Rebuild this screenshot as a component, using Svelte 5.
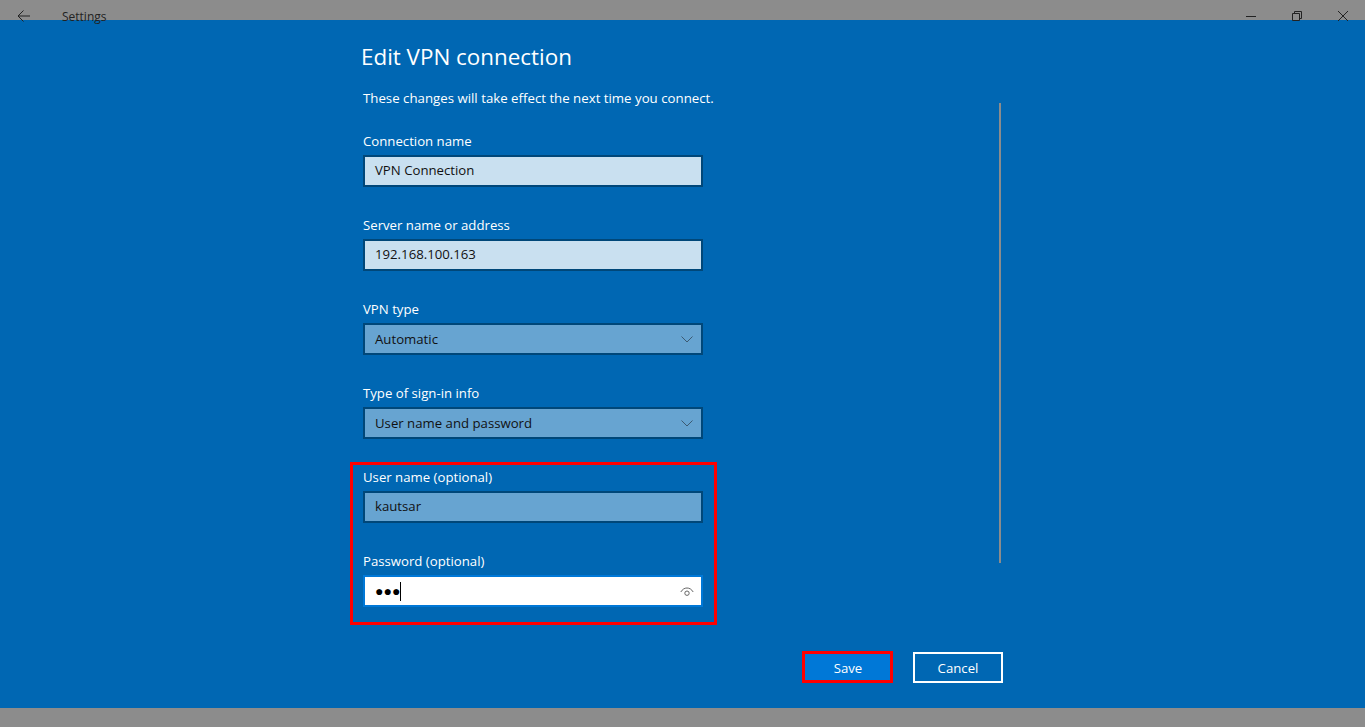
<script>
  const topFields = [
    { label: 'Connection name', value: 'VPN Connection', kind: 'text' },
    { label: 'Server name or address', value: '192.168.100.163', kind: 'text' },
    { label: 'VPN type', value: 'Automatic', kind: 'select' },
    { label: 'Type of sign-in info', value: 'User name and password', kind: 'select' }
  ];
</script>

<div class="window">
  <header class="titlebar">
    <svg class="back" width="16" height="16" viewBox="0 0 16 16" aria-hidden="true">
      <path d="M14 8H2.500M7.500 2.500 2 8l5.500 5.500" fill="none" stroke="#222" stroke-width="1" />
    </svg>
    <span class="app-title">Settings</span>
    <div class="controls">
      <svg width="10" height="10" viewBox="0 0 10 10" aria-hidden="true">
        <path d="M0 5.500h10" stroke="#222" stroke-width="1" />
      </svg>
      <svg width="10" height="10" viewBox="0 0 10 10" aria-hidden="true">
        <path d="M2.500 2.500V.5h7v7H7.500M.5 2.500h7v7h-7z" fill="none" stroke="#222" stroke-width="1" />
      </svg>
      <svg width="10" height="10" viewBox="0 0 10 10" aria-hidden="true">
        <path d="M0 0l10 10M10 0 0 10" stroke="#222" stroke-width="1" />
      </svg>
    </div>
  </header>

  <main class="page">
    <div class="dialog">
      <h1>Edit VPN connection</h1>
      <div class="body">
        <div class="form">
          <p class="note">These changes will take effect the next time you connect.</p>

          {#each topFields as f}
            <div class="row">
              <div class="label">{f.label}</div>
              <div class="field {f.kind}">
                <span>{f.value}</span>
                {#if f.kind === 'select'}
                  <svg class="chevron" width="12" height="7" viewBox="0 0 12 7" aria-hidden="true">
                    <path d="M.5.5 6 6 11.500.5" fill="none" stroke="#3c5a72" stroke-width="1" />
                  </svg>
                {/if}
              </div>
            </div>
          {/each}

          <div class="highlight">
            <div class="row">
              <div class="label">User name (optional)</div>
              <div class="field select lifted"><span>kautsar</span></div>
            </div>
            <div class="row last">
              <div class="label">Password (optional)</div>
              <div class="field password">
                <span class="dots">●●●</span><span class="caret"></span>
                <svg class="eye" width="14" height="10" viewBox="0 0 14 10" aria-hidden="true">
                  <path d="M.8 5C2.500 2.200 4.600 1 7 1s4.500 1.200 6.200 4" fill="none" stroke="#666" stroke-width="1" />
                  <circle cx="7" cy="6.200" r="2.200" fill="none" stroke="#666" stroke-width="1" />
                </svg>
              </div>
            </div>
          </div>
        </div>
        <div class="scrollbar"></div>
      </div>

      <div class="actions">
        <button class="save">Save</button>
        <button class="cancel">Cancel</button>
      </div>
    </div>
  </main>

  <div class="bottom"></div>
</div>

<style>
  :global(body) {
    margin: 0;
    background: #8c8c8c;
  }

  .window {
    height: 727px;
    display: flex;
    flex-direction: column;
    font-family: "Open Sans", "Noto Sans", sans-serif;
    color: #fff;
    overflow: hidden;
  }

  .titlebar {
    height: 20px;
    flex: none;
    display: flex;
    background: #8c8c8c;
    color: #222;
    position: relative;
    z-index: 1;
  }

  .back {
    margin: 8px 0 0 16px;
  }

  .app-title {
    margin: 8px 0 0 30px;
    font-size: 12px;
    line-height: 18px;
    height: 18px;
  }

  .controls {
    margin-left: auto;
    margin-right: 17px;
    display: flex;
    gap: 36px;
    padding-top: 11px;
  }

  .controls svg {
    display: block;
  }

  .page {
    flex: 1;
    background: #0067b3;
    padding-left: 361px;
  }

  .bottom {
    height: 19px;
    flex: none;
    background: #8c8c8c;
  }

  .dialog {
    width: 642px;
  }

  h1 {
    margin: 0;
    padding-top: 20px;
    font-size: 22.4px;
    line-height: 34px;
    font-weight: 400;
  }

  .body {
    display: flex;
  }

  .form {
    flex: 1;
    padding-left: 2px;
  }

  .note {
    margin: 0;
    padding-top: 14px;
    height: 57px;
    box-sizing: border-box;
    font-size: 13.25px;
    line-height: 20px;
  }

  .row {
    margin-bottom: 28px;
  }

  .row.last {
    margin-bottom: 15px;
  }

  .label {
    font-size: 13.2px;
    line-height: 20px;
    margin-bottom: 4px;
  }

  .field {
    width: 340px;
    height: 32px;
    box-sizing: border-box;
    border: 2px solid #004779;
    padding: 0 10px;
    display: flex;
    align-items: center;
    font-size: 13.2px;
    color: #111;
  }

  .field.text,
  .field.lifted {
    padding-bottom: 2px;
  }

  .field.text {
    background: #c9e0f0;
  }

  .field.select {
    background: #67a4d1;
  }

  .field.password {
    background: #fff;
    border-color: #0078d7;
    color: #000;
  }

  .chevron {
    margin-left: auto;
    margin-right: -2px;
  }

  .dots {
    font-size: 14px;
    line-height: 1;
  }

  .caret {
    width: 1px;
    height: 19px;
    background: #000;
  }

  .eye {
    margin-left: auto;
    margin-right: -3px;
    margin-top: 2px;
  }

  .highlight {
    width: 351px;
    margin: -5px 0 0 -13px;
    padding: 2px 0 0 10px;
    border: 3px solid #f00;
  }

  .scrollbar {
    width: 2px;
    height: 460px;
    margin: 29px 2px 0 0;
    background: #8c8c8c;
  }

  .actions {
    display: flex;
    justify-content: flex-end;
    align-items: flex-end;
    gap: 20px;
    margin-top: 26px;
  }

  button {
    width: 90px;
    height: 31px;
    box-sizing: border-box;
    font: inherit;
    font-size: 13.2px;
    color: #fff;
    padding: 0;
  }

  .save {
    width: 91px;
    height: 32px;
    padding: 1px 0 0 1px;
    background: #0078d7;
    border: 3px solid #f00;
  }

  .cancel {
    background: transparent;
    border: 2px solid #fff;
  }
</style>
